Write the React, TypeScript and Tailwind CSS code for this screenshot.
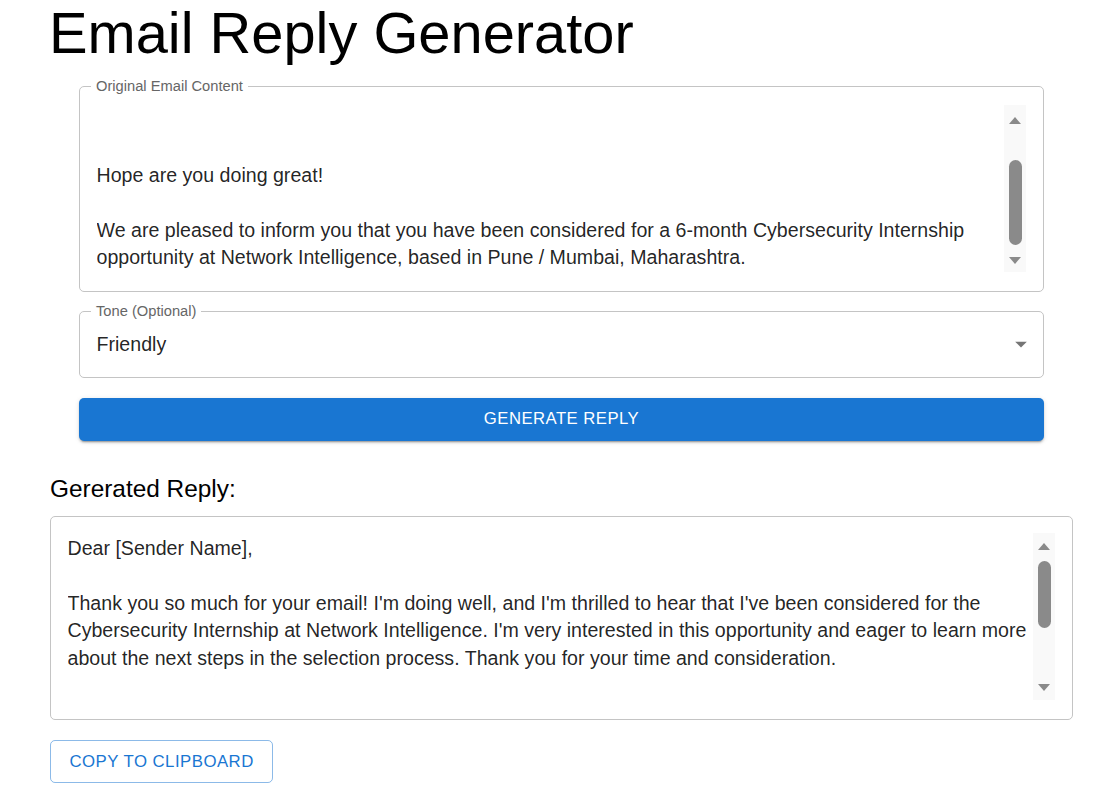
import {ReactNode} from "react";

interface ScrollbarProps {
    upClassName: string;
    thumbClassName: string;
    downClassName: string;
}

// Looks like the browser's own textarea scrollbar
const Scrollbar = ({upClassName, thumbClassName, downClassName}: ScrollbarProps) => (
    <div className="-mt-[1.5px] flex h-[167px] w-[22px] shrink-0 flex-col items-center bg-[#f9f9f9]">
        <div className={`h-0 w-0 border-x-[6.5px] border-b-[7px] border-x-transparent border-b-[#8a8a8a] ${upClassName}`} />
        <div className={`w-[13px] rounded-full bg-[#8a8a8a] ${thumbClassName}`} />
        <div className={`mt-auto h-0 w-0 border-x-[6.5px] border-t-[7px] border-x-transparent border-t-[#8a8a8a] ${downClassName}`} />
    </div>
);

interface OutlinedProps {
    label?: string;
    className?: string;
    children: ReactNode;
}

const Outlined = ({label, className = '', children}: OutlinedProps) => (
    <div className={`relative rounded-[5px] border border-[#c4c4c4] ${className}`}>
        {label && (
            <span className="absolute -top-[8px] left-[11px] bg-white px-[5px] text-[14.7px] leading-[14px] text-[#666666]">
                {label}
            </span>
        )}
        {children}
    </div>
);

const Line = ({children}: {children?: ReactNode}) => (
    <div className="h-[27.5px] whitespace-nowrap leading-[27.5px]">{children}</div>
);

export default function App() {
    return (
        <div className="ml-[50px] w-[1023px] bg-white font-['Liberation_Sans',Arial,sans-serif] text-[rgba(0,0,0,0.87)]">
            <h1 className="m-0 -ml-[1px] text-[57.8px] font-normal leading-[66px] text-black">Email Reply Generator</h1>

            {/* Form */}
            <div className="mx-[29px] pt-[20px]">
                <Outlined label="Original Email Content">
                    <div className="flex pl-[16.5px] pr-[17px] pt-[19.5px] pb-[18.5px] text-[19.6px]">
                        <div className="h-[165px] flex-1 overflow-hidden">
                            <Line />
                            <Line />
                            <Line>Hope are you doing great!</Line>
                            <Line />
                            <Line>We are pleased to inform you that you have been considered for a 6-month Cybersecurity Internship</Line>
                            <Line>opportunity at Network Intelligence, based in Pune / Mumbai, Maharashtra.</Line>
                        </div>
                        <Scrollbar upClassName="mt-[12px]" thumbClassName="mt-[36px] h-[85px]" downClassName="mb-[8px]" />
                    </div>
                </Outlined>

                <Outlined label="Tone (Optional)" className="mt-[19.5px]">
                    <div className="flex h-[64.5px] items-center justify-between pl-[16.5px] pr-[8px] text-[19.6px]">
                        <span>Friendly</span>
                        <svg viewBox="0 0 24 24" className="h-[28px] w-[28px] fill-[rgba(0,0,0,0.54)]">
                            <path d="M7 10l5 5 5-5z" />
                        </svg>
                    </div>
                </Outlined>

                <button className="mt-[20px] flex h-[43px] w-full items-center justify-center rounded-[5px] bg-[#1976d2] text-[16.7px] uppercase tracking-[0.47px] text-white shadow-[0_3px_1px_-2px_rgba(0,0,0,0.2),0_2px_2px_0_rgba(0,0,0,0.14),0_1px_5px_0_rgba(0,0,0,0.12)]">
                    Generate Reply
                </button>
            </div>

            {/* Result */}
            <h6 className="m-0 mt-[29.5px] text-[24.4px] font-normal leading-[37.8px] text-black">Gererated Reply:</h6>
            <Outlined className="mt-[8px]">
                <div className="flex pl-[16.5px] pr-[17px] pt-[18px] pb-[19px] text-[19.6px]">
                    <div className="h-[165px] flex-1 overflow-hidden">
                        <Line>Dear [Sender Name],</Line>
                        <Line />
                        <Line>Thank you so much for your email! I'm doing well, and I'm thrilled to hear that I've been considered for the</Line>
                        <Line>Cybersecurity Internship at Network Intelligence. I'm very interested in this opportunity and eager to learn more</Line>
                        <Line>about the next steps in the selection process. Thank you for your time and consideration.</Line>
                        <Line />
                    </div>
                    <Scrollbar upClassName="mt-[10px]" thumbClassName="mt-[11px] h-[67px]" downClassName="mb-[9px]" />
                </div>
            </Outlined>

            <button className="mt-[20px] mb-[6px] flex h-[43px] items-center rounded-[5px] border border-[rgba(25,118,210,0.5)] px-[18.5px] text-[16.8px] uppercase tracking-[0.47px] text-[#1976d2]">
                Copy to Clipboard
            </button>
        </div>
    );
}
